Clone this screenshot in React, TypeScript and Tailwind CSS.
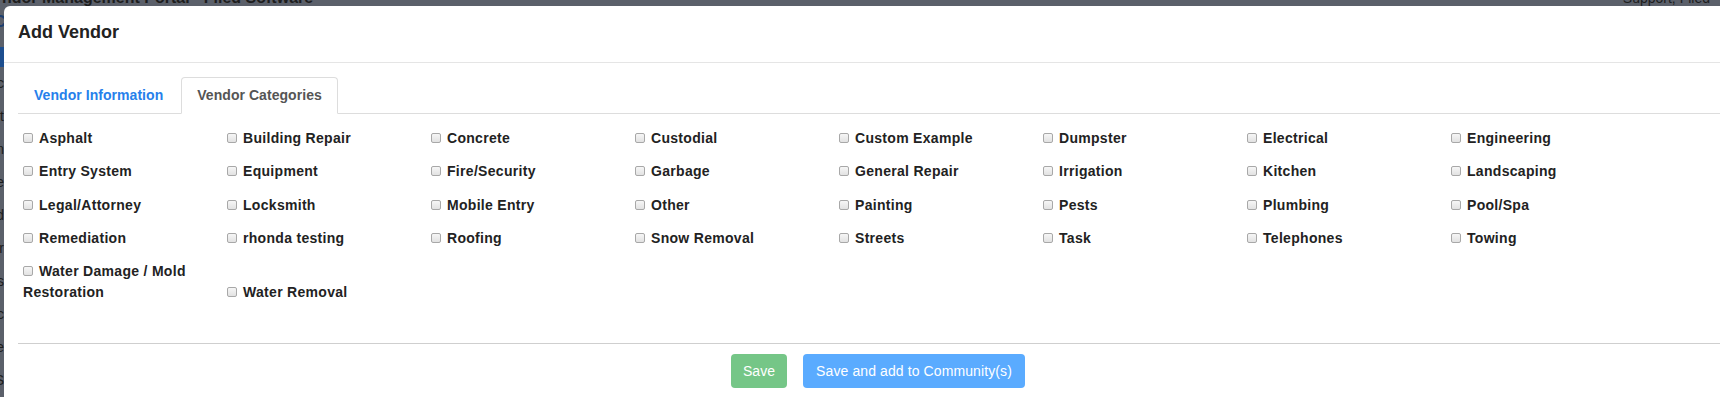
import React from 'react';

const categories: string[] = [
    'Asphalt', 'Building Repair', 'Concrete', 'Custodial', 'Custom Example', 'Dumpster', 'Electrical', 'Engineering',
    'Entry System', 'Equipment', 'Fire/Security', 'Garbage', 'General Repair', 'Irrigation', 'Kitchen', 'Landscaping',
    'Legal/Attorney', 'Locksmith', 'Mobile Entry', 'Other', 'Painting', 'Pests', 'Plumbing', 'Pool/Spa',
    'Remediation', 'rhonda testing', 'Roofing', 'Snow Removal', 'Streets', 'Task', 'Telephones', 'Towing',
    'Water Damage / Mold Restoration', 'Water Removal',
];

const edgeLetters = ['c', 'lt', 'n', 'e', 'd', 'rr', 's', 'c', 'e', 'S'];

function Checkbox() {
    return (
        <span className="inline-block w-[10px] h-[10px] mr-[6px] rounded-[2px] border border-[#a8a8a8] bg-gradient-to-b from-[#f6f6f6] to-[#e2e2e2]" />
    );
}

export default function App() {
    return (
        <div className="w-[1720px] h-[397px] overflow-hidden bg-[#5b606a] flex flex-col font-['Liberation_Sans',Arial,sans-serif]">

            {/* Page behind the modal */}
            <div className="h-[6px] shrink-0 overflow-hidden flex justify-between px-[2px]">
                <span className="-mt-[10px] leading-[16px] text-[16px] font-bold text-[#1d1d1d] whitespace-nowrap">ndor Management Portal - Filed Software</span>
                <span className="-mt-[10px] mr-[8px] leading-[16px] text-[14px] text-[#1d1d1d] whitespace-nowrap">Support, Filed</span>
            </div>

            <div className="flex flex-1 min-h-0">
                <div className="w-[4px] shrink-0 overflow-hidden flex flex-col">
                    <div className="h-[12px]" />
                    <div className="h-[7px] text-[16px] leading-[16px] font-bold text-[#1d3f70] -ml-[6px]">C</div>
                    <div className="h-[40px]" />
                    <div className="h-[31px] bg-[#1d4e8f]" />
                    <div className="flex flex-col items-end text-[14px] leading-[33px] text-[#1d1d1d] -ml-[8px]">
                        {edgeLetters.map((l, i) => (
                            <span key={i}>{l}</span>
                        ))}
                    </div>
                </div>

                {/* Modal */}
                <div className="w-[1748px] shrink-0 bg-white rounded-tl-[6px] flex flex-col">
                    <div className="h-[57px] shrink-0 border-b border-[#e5e5e5] px-[14px] pb-[4px] flex items-center">
                        <h4 className="text-[18px] font-bold text-[#222]">Add Vendor</h4>
                    </div>

                    <div className="px-[14px] pt-[14px]">
                        {/* Tabs */}
                        <div className="flex border-b border-[#dddddd]">
                            <div className="h-[37px] -mb-px px-[15px] flex items-center text-[14px] font-bold tracking-[0.05px] text-[#2680eb] border border-transparent">
                                Vendor Information
                            </div>
                            <div className="h-[37px] -mb-px ml-[2px] px-[15px] flex items-center text-[14px] font-bold tracking-[0.05px] text-[#555] bg-white border border-[#dddddd] border-b-white rounded-t-[4px]">
                                Vendor Categories
                            </div>
                        </div>

                        {/* Categories */}
                        <div className="mt-[14px] pl-[5px] grid grid-cols-[repeat(8,204px)] gap-y-[12.33px] items-end">
                            {categories.map((c) => (
                                <label key={c} className="pr-[10px] text-[14px] leading-[21px] font-bold tracking-[0.3px] text-[#222]">
                                    <Checkbox />
                                    {c}
                                </label>
                            ))}
                        </div>

                        <div className="mt-[40px] border-t border-[#cfcfcf]" />
                    </div>

                    {/* Footer */}
                    <div className="flex justify-center gap-[16px] pt-[10px]">
                        <button className="h-[34px] w-[56px] rounded-[4px] bg-[#75c687] text-white text-[14px]">Save</button>
                        <button className="h-[34px] w-[222px] rounded-[4px] bg-[#5aabff] text-white text-[14px] tracking-[0.1px]">Save and add to Community(s)</button>
                    </div>
                </div>
            </div>
        </div>
    );
}
